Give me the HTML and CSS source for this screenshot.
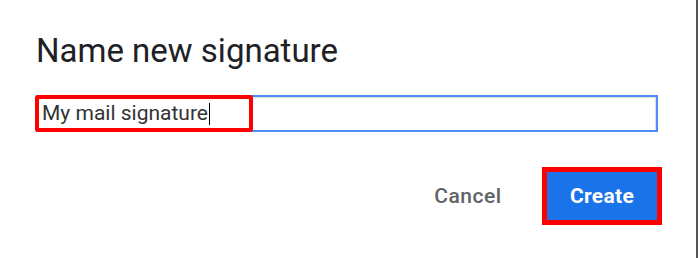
FILE: index.html
```html
<!DOCTYPE html>
<html lang="en">
<head>
  <meta charset="UTF-8" />
  <meta name="viewport" content="width=device-width, initial-scale=1" />
  <title>Name new signature</title>
  <link rel="stylesheet" href="styles.css">
</head>
<body>
  <div class="dialog">
    <h1 class="dialog-title">Name new signature</h1>

    <div class="field">
      <div class="field-box">
        <span class="field-text">My mail signature</span><span class="caret"></span>
      </div>
      <div class="highlight"></div>
    </div>

    <div class="actions">
      <button class="btn btn-text">Cancel</button>
      <button class="btn btn-primary">Create</button>
    </div>
  </div>
</body>
</html>
```

FILE: styles.css
```css
body {
  margin: 0;
  padding: 0;
  background: #fff;
  font-family: Roboto, 'Noto Sans', sans-serif;
}

.dialog {
  width: 622px;
  height: 227px;
  padding: 31px 38px 0 36px;
  border-right: 2px solid #555;
  background: #fff;
}

.dialog-title {
  margin: 0;
  font-size: 33px;
  line-height: 40px;
  font-weight: 400;
  color: #202124;
}

.field {
  position: relative;
  margin-top: 24px;
}

.field-box {
  height: 33px;
  border: 2px solid #4d8ef6;
  padding-left: 4px;
  box-shadow: inset -1px 1px 1px rgba(0, 0, 0, 0.14);
  font-size: 21px;
  line-height: 33px;
  color: #333;
  display: flex;
  align-items: center;
}

.caret {
  display: inline-block;
  width: 1px;
  height: 22px;
  margin-left: 1px;
  background: #000;
}

/* annotation box over the typed name */
.highlight {
  position: absolute;
  left: -1px;
  top: 0;
  width: 210px;
  height: 29px;
  border: 4px solid #ff0000;
  border-radius: 3px;
}

.actions {
  display: flex;
  justify-content: flex-end;
  gap: 24px;
  margin-top: 40px;
  margin-right: 1px;
}

.btn {
  width: 110px;
  height: 48px;
  border: none;
  border-radius: 4px;
  font-family: Roboto, 'Noto Sans', sans-serif;
  font-size: 21px;
  font-weight: 500;
  letter-spacing: 0.5px;
  cursor: pointer;
}

.btn-text {
  background: transparent;
  color: #5f6368;
}

.btn-primary {
  background: #1a73e8;
  color: #fff;
  font-weight: 700;
  letter-spacing: 0.3px;
  border-radius: 0;
  outline: 5px solid #ff0000;
  outline-offset: 0;
}
```
